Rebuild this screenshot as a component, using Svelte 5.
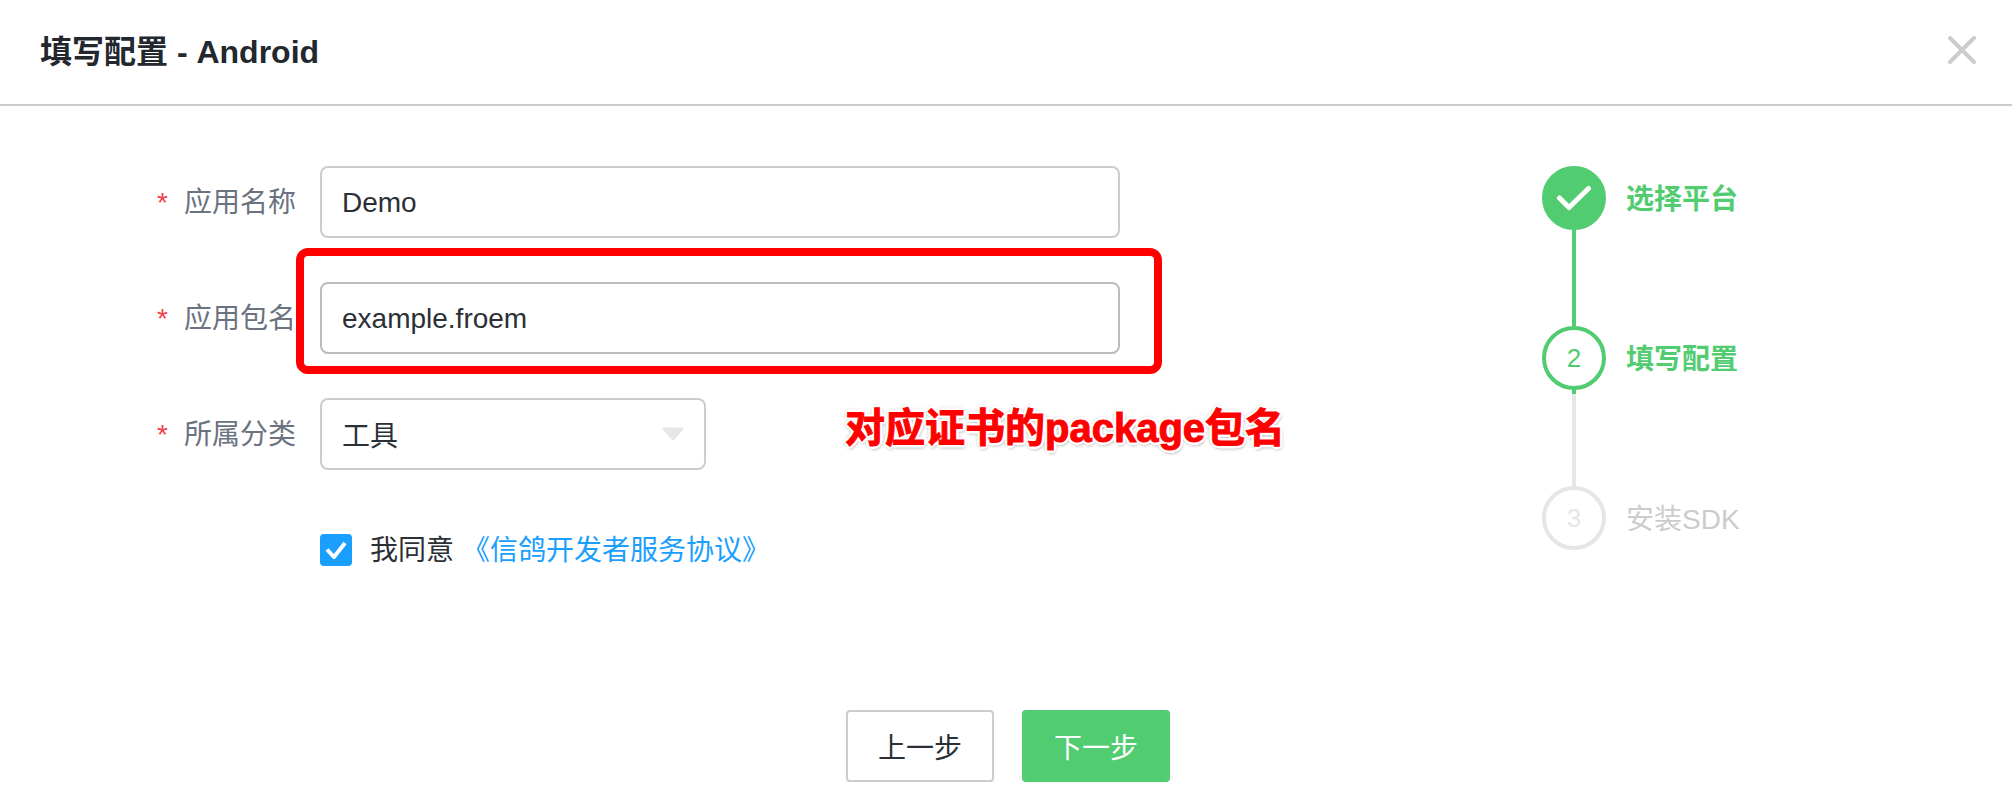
<script>
  const fields = [
    { label: '应用名称', value: 'Demo' },
    { label: '应用包名', value: 'example.froem' }
  ];
</script>

<div class="dialog">
  <header class="head">
    <h1>填写配置 - Android</h1>
    <button class="close" aria-label="关闭">
      <svg width="28" height="28" viewBox="0 0 28 28"><path d="M2 2 26 26M26 2 2 26" /></svg>
    </button>
  </header>

  <main class="body">
    <form class="form">
      {#each fields as f}
        <div class="row">
          <label class="label"><span class="star">*</span>{f.label}</label>
          <input class="input" value={f.value} readonly />
        </div>
      {/each}
      <div class="row">
        <span class="label"><span class="star">*</span>所属分类</span>
        <div class="select">
          <span>工具</span>
          <svg class="caret" width="22" height="14" viewBox="0 0 22 14"><path d="M1.5 1.5h19L11 12.5z" /></svg>
        </div>
      </div>
      <div class="agree">
        <span class="check">
          <svg width="22" height="18" viewBox="0 0 22 18"><path d="M2 8.500l7 7.500L20 2" /></svg>
        </span>
        <span class="agree-text">我同意</span>
        <a class="link" href="#terms">《信鸽开发者服务协议》</a>
      </div>
    </form>

    <ol class="steps">
      <li class="step done">
        <div class="dot">
          <svg width="36" height="26" viewBox="0 0 36 26"><path d="M3.500 13l9.500 9.500L32.500 3.500" /></svg>
        </div>
        <span class="step-label">选择平台</span>
      </li>
      <li class="link-line green"></li>
      <li class="step active">
        <div class="dot">2</div>
        <span class="step-label">填写配置</span>
      </li>
      <li class="link-line grey"></li>
      <li class="step todo">
        <div class="dot">3</div>
        <span class="step-label">安装SDK</span>
      </li>
    </ol>
  </main>

  <footer class="foot">
    <button class="btn prev">上一步</button>
    <button class="btn next">下一步</button>
  </footer>

  <div class="mark-box"></div>
  <div class="mark-text">对应证书的package包名</div>
</div>

<style>
  :global(body) {
    margin: 0;
    background: #fff;
  }
  .dialog {
    position: relative;
    width: 2012px;
    height: 812px;
    overflow: hidden;
    background: #fff;
    color: #2b2f36;
    font-family: "Liberation Sans", "Noto Sans CJK SC", sans-serif;
    font-size: 28px;
  }
  .head {
    display: flex;
    align-items: center;
    justify-content: space-between;
    box-sizing: content-box;
    height: 98px;
    padding: 0 36px 6px 40px;
    border-bottom: 2px solid #ccc;
  }
  h1 {
    margin: 0;
    font-size: 32px;
    font-weight: 700;
    color: #23272e;
  }
  .close {
    display: flex;
    padding: 1px 0 0;
    border: 0;
    background: none;
  }
  .close path {
    fill: none;
    stroke: #ccc;
    stroke-width: 4;
    stroke-linecap: round;
  }
  .body {
    display: flex;
    padding: 60px 0 0 0;
    height: 604px;
    box-sizing: border-box;
  }
  .form {
    width: 1542px;
    flex: none;
    display: flex;
    flex-direction: column;
    gap: 44px;
  }
  .row {
    display: flex;
    align-items: center;
    gap: 24px;
    height: 72px;
  }
  .label {
    width: 296px;
    flex: none;
    box-sizing: border-box;
    padding-top: 2px;
    text-align: right;
    color: #6b7280;
    line-height: 40px;
  }
  .star {
    color: #f0414a;
    margin-right: 16px;
    font-size: 28px;
  }
  .input,
  .select {
    box-sizing: border-box;
    height: 72px;
    border: 2px solid #ccc;
    border-radius: 8px;
    background: #fff;
    padding: 0 20px;
    font: inherit;
    color: #2b2f36;
    outline: none;
  }
  .input {
    width: 800px;
    padding-top: 2px;
  }
  .row:nth-child(2) .input {
    border-color: #bcbcbc;
  }
  .select {
    width: 386px;
    display: flex;
    align-items: center;
    justify-content: space-between;
  }
  .caret path {
    fill: #e6e6e6;
    stroke: #e6e6e6;
    stroke-width: 2;
    stroke-linejoin: round;
  }
  .agree {
    display: flex;
    align-items: center;
    margin: 20px 0 0 320px;
    height: 32px;
  }
  .check {
    width: 32px;
    height: 32px;
    border-radius: 4px;
    background: #1a9fff;
    display: flex;
    align-items: center;
    justify-content: center;
    margin-right: 18px;
  }
  .check path {
    fill: none;
    stroke: #fff;
    stroke-width: 4;
  }
  .agree-text {
    margin-right: 8px;
    padding-bottom: 4px;
  }
  .link {
    color: #1a9fff;
    text-decoration: none;
    padding-bottom: 4px;
  }
  .steps {
    list-style: none;
    margin: 0;
    padding: 0;
    display: flex;
    flex-direction: column;
  }
  .step {
    display: flex;
    align-items: center;
    gap: 20px;
    height: 64px;
  }
  .step-label {
    padding-bottom: 2px;
  }
  .dot {
    box-sizing: border-box;
    width: 64px;
    height: 64px;
    border-radius: 50%;
    border: 4px solid currentColor;
    display: flex;
    align-items: center;
    justify-content: center;
    font-size: 26px;
  }
  .done,
  .active {
    color: #52cc70;
  }
  .done .dot {
    background: #52cc70;
  }
  .done path {
    fill: none;
    stroke: #fff;
    stroke-width: 5;
    stroke-linecap: round;
    stroke-linejoin: round;
  }
  .done .step-label,
  .active .step-label {
    font-weight: 700;
  }
  .todo {
    color: #ccc;
  }
  .todo .dot {
    color: #e6e6e6;
  }
  .link-line {
    width: 4px;
    height: 96px;
    margin-left: 30px;
  }
  .green {
    background: #52cc70;
  }
  .grey {
    background: linear-gradient(#52cc70 4px, #e6e6e6 4px);
  }
  .foot {
    display: flex;
    justify-content: center;
    gap: 28px;
    padding-left: 4px;
  }
  .btn {
    box-sizing: border-box;
    width: 148px;
    height: 72px;
    border-radius: 4px;
    font: inherit;
    padding: 0;
  }
  .prev {
    background: #fff;
    border: 2px solid #ccc;
    color: #2b2f36;
  }
  .next {
    background: #52cc70;
    border: 0;
    color: #fff;
  }
  .mark-box {
    position: absolute;
    left: 296px;
    top: 248px;
    width: 866px;
    height: 126px;
    box-sizing: border-box;
    border: 8px solid #f00;
    border-radius: 12px;
  }
  .mark-text {
    position: absolute;
    left: 845px;
    top: 403px;
    color: #f00;
    font-size: 40px;
    font-weight: 700;
    line-height: 50px;
    white-space: nowrap;
    -webkit-text-stroke: 1px #f00;
    text-shadow:
      3px 0 0 #fff, -3px 0 0 #fff, 0 3px 0 #fff, 0 -3px 0 #fff,
      2px 2px 0 #fff, -2px 2px 0 #fff, 2px -2px 0 #fff, -2px -2px 0 #fff,
      3px 1px 3px rgba(0, 0, 0, 0.22), -3px 1px 3px rgba(0, 0, 0, 0.22),
      1px 4px 3px rgba(0, 0, 0, 0.22), -1px -3px 3px rgba(0, 0, 0, 0.14);
  }
</style>
